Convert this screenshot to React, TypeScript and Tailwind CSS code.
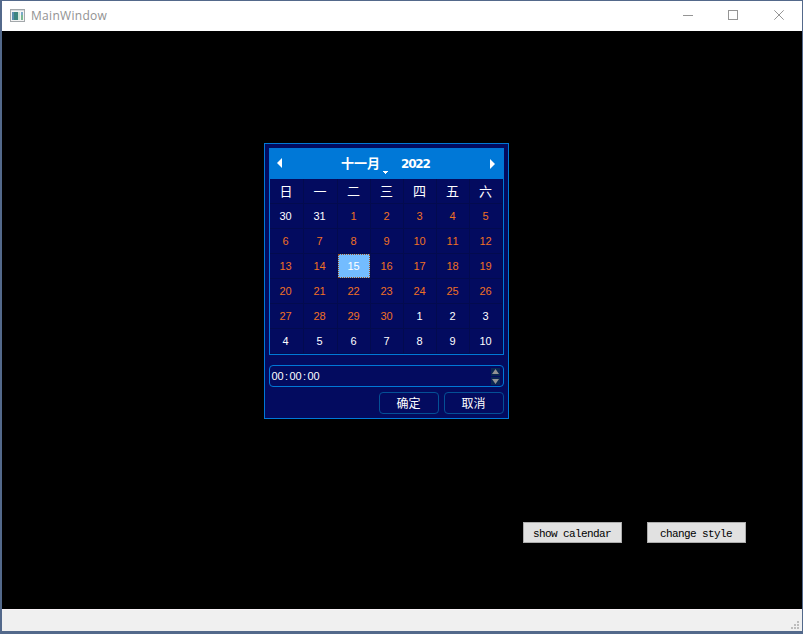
import React from "react";

const weekdays = ["日", "一", "二", "三", "四", "五", "六"];
const days = [30, 31, ...Array.from({ length: 30 }, (_, i) => i + 1), ...Array.from({ length: 10 }, (_, i) => i + 1)];

function TitleBar() {
  return (
    <header className="flex h-[30px] shrink-0 items-center bg-white text-[#929292]">
      <svg className="mb-px ml-2 h-[14px] w-[15px] shrink-0" viewBox="0 0 15 14" shapeRendering="crispEdges">
        <rect x="0.5" y="0.5" width="14" height="12" fill="#f4f4f4" stroke="#a3a8ab" />
        <rect x="1" y="1" width="13" height="1" fill="#d5dadd" />
        <rect x="2" y="3" width="6" height="8" fill="#3d8580" />
        <rect x="2" y="3" width="2" height="8" fill="#5b8fb0" />
        <rect x="8" y="3" width="2" height="8" fill="#d3e5da" />
        <rect x="11" y="3" width="2" height="3" fill="#79aac8" />
        <rect x="11" y="6" width="2" height="5" fill="#79b894" />
      </svg>
      <span className="ml-[6px] font-['Open_Sans','Noto_Sans',sans-serif] text-[12px] leading-[16px] tracking-[0.3px]">MainWindow</span>
      <svg className="mb-px ml-auto mr-[16px] h-[11px] w-[103px]" viewBox="0 0 103 11" fill="none" stroke="#959595">
        <path d="M0 5.5h10M45.5 .5h9v9h-9z" shapeRendering="crispEdges" />
        <path d="M91.3.3l9.4 9.4M100.7.3l-9.4 9.4" />
      </svg>
    </header>
  );
}

function Calendar() {
  return (
    <div className="h-[207px] w-[235px] border border-t-0 border-[#0078d7]">
      <div className="-mx-px flex h-[31px] items-center bg-[#0078d7] text-white">
        <svg className="mb-px ml-2 h-[10px] w-[5px]" viewBox="0 0 5 10" fill="white"><path d="M5 0v10L0 5z" /></svg>
        <div className="relative mb-[2px] ml-[59px] w-[40px] whitespace-nowrap font-['Noto_Sans_CJK_SC',sans-serif] text-[13px] font-bold leading-[20px]">
          十一月
          <svg className="absolute left-[42px] top-[18px] h-[3px] w-[5px]" viewBox="0 0 5 3" fill="white" shapeRendering="crispEdges"><path d="M0 0h5v1H0zM1 1h3v1H1zM2 2h1v1H2z" /></svg>
        </div>
        <span className="ml-[20px] mt-px font-['DejaVu_Sans',sans-serif] text-[12px] font-bold leading-[14px] tracking-[-1.2px]">2022</span>
        <svg className="ml-auto mr-[9px] h-[10px] w-[5px]" viewBox="0 0 5 10" fill="white"><path d="M0 0v10l5-5z" /></svg>
      </div>
      <div className="grid grid-cols-[34px_34px_repeat(5,33px)] auto-rows-[25px] text-white">
        {weekdays.map((day) => (
          <div key={day} className="flex items-center justify-center border-r border-b border-[#030b4f] pb-[2px] pr-px font-['Noto_Sans_CJK_SC',sans-serif] text-[13px] leading-none">
            {day}
          </div>
        ))}
        {days.map((day, i) => {
          const selected = i === 16;
          const color = selected || i < 2 || i > 31 ? "text-white" : "text-[#f07024]";
          return (
            <div key={i} className={`flex border-r border-b border-[#030b4f] font-['Liberation_Sans',sans-serif] text-[11px] leading-none ${color}`}>
              <span className={`flex flex-1 items-center justify-center ${selected ? "border border-dotted border-[#985026] bg-[#73bcff] pr-px" : i % 7 < 2 ? "pr-[2px]" : "pr-px"}`}>
                {String(day).split("").map((digit, n) => <span key={n} className="w-[6px] text-center">{digit}</span>)}
              </span>
            </div>
          );
        })}
      </div>
    </div>
  );
}

function TimeField() {
  return (
    <div className="mt-[10px] flex h-[22px] items-center rounded-[4px] border border-[#0078d7] pl-[1.5px] font-['Liberation_Sans',sans-serif] text-[11px] leading-none text-white">
      {"00:00:00".split("").map((char, i) => <span key={i} className="w-[6px] text-center">{char}</span>)}
      <svg className="ml-auto mr-[3px] h-[18px] w-[9px]" viewBox="0 0 9 18">
        <path fill="#092653" d="M0 1h9v8H0zM0 10h9v8H0z" />
        <path fill="#929292" d="M4.5 2L8 7H1zM1 12h7l-3.5 5z" />
      </svg>
    </div>
  );
}

const dialogButton = "h-[22px] w-[60px] rounded-[4px] border border-[#045096] pr-px text-center font-['Noto_Sans_CJK_SC',sans-serif] text-[12px] leading-[20px]";
const pushButton = "h-[21px] w-[99px] border border-[#adadad] bg-[#e1e1e1] pr-px pt-px text-center font-['Liberation_Mono',monospace] text-[11px] font-medium leading-[20px] tracking-[-0.6px] whitespace-nowrap text-black";

export default function App() {
  return (
    <div className="flex h-[634px] w-[803px] flex-col border-t border-r border-b-[3px] border-l-2 border-[#53698b]">
      <TitleBar />
      <main className="flex h-[578px] shrink-0 flex-col bg-black">
        <section className="ml-[262px] mt-[112px] h-[276px] w-[245px] border border-[#0078d7] bg-[#030b5f] p-1 text-white">
          <Calendar />
          <TimeField />
          <div className="mt-[5px] flex justify-end gap-[5px]">
            <button className={dialogButton}>确定</button>
            <button className={dialogButton}>取消</button>
          </div>
        </section>
        <div className="ml-[521px] mt-[103px] flex gap-[25px]">
          <button className={pushButton}>show calendar</button>
          <button className={pushButton}>change style</button>
        </div>
      </main>
      <footer className="flex h-[22px] shrink-0 items-end justify-end border-t border-[#f9f4f7] bg-[#f0f0f0]">
        <svg className="mb-[2px] mr-[3px] h-[8px] w-[8px]" viewBox="0 0 8 8" fill="#bdbdbd">
          <path d="M6 0h2v2H6zM3 3h2v2H3zM6 3h2v2H6zM0 6h2v2H0zM3 6h2v2H3zM6 6h2v2H6z" />
        </svg>
      </footer>
    </div>
  );
}
